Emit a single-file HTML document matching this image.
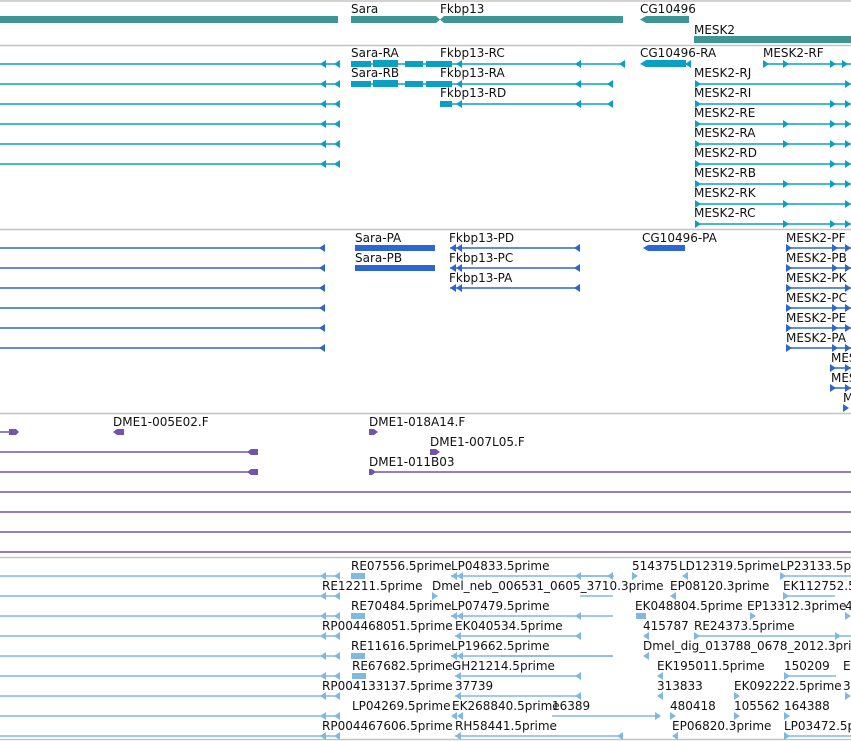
<!DOCTYPE html>
<html><head><meta charset="utf-8"><style>
html,body{margin:0;padding:0;background:#fff;width:851px;height:741px;overflow:hidden}
svg{display:block}
text{font-family:"DejaVu Sans","Liberation Sans",sans-serif;font-size:12px;fill:#111}
</style></head><body>
<svg width="851" height="741" viewBox="0 0 851 741">
<defs>
<polygon id="al" points="0,0 6,-4 6,4"/>
<polygon id="ar" points="6,0 0,-4 0,4"/>
</defs>
<!-- separators -->
<g stroke="#c4c4c4" stroke-width="1.5">
<line x1="0" y1="1" x2="851" y2="1"/><line x1="0" y1="45.5" x2="851" y2="45.5"/>
<line x1="0" y1="229.5" x2="851" y2="229.5"/><line x1="0" y1="413.5" x2="851" y2="413.5"/>
<line x1="0" y1="557.5" x2="851" y2="557.5"/><line x1="0" y1="739.5" x2="851" y2="739.5"/>
</g>

<!-- Track 1 genes -->
<g fill="#3f9494">
<rect x="0" y="16" width="338" height="7"/>
<polygon points="351,16 436,16 440,19.5 444,16 623,16 623,23 444,23 440,19.5 436,23 351,23"/>
<polygon points="640,19.5 646,16 689,16 689,23 646,23"/>
<rect x="694" y="36" width="157" height="7"/>
</g>
<text x="351" y="13">Sara</text><text x="440" y="13">Fkbp13</text><text x="640" y="13">CG10496</text><text x="694" y="34">MESK2</text>

<!-- Track 2 transcripts -->
<g fill="#0aa0c4" stroke="#0aa0c4">
<g stroke-width="1.5">
<line x1="0" y1="64" x2="340" y2="64"/><line x1="0" y1="84" x2="340" y2="84"/><line x1="0" y1="104" x2="340" y2="104"/>
<line x1="0" y1="124" x2="340" y2="124"/><line x1="0" y1="144" x2="340" y2="144"/><line x1="0" y1="164" x2="340" y2="164"/>
<line x1="351" y1="64" x2="625" y2="64"/><line x1="351" y1="84" x2="613" y2="84"/><line x1="440" y1="104" x2="613" y2="104"/>
<line x1="763" y1="64" x2="851" y2="64"/>
<line x1="695" y1="84" x2="851" y2="84"/><line x1="695" y1="104" x2="851" y2="104"/><line x1="695" y1="124" x2="851" y2="124"/>
<line x1="695" y1="144" x2="851" y2="144"/><line x1="695" y1="164" x2="851" y2="164"/><line x1="695" y1="184" x2="851" y2="184"/>
<line x1="695" y1="204" x2="851" y2="204"/><line x1="695" y1="224" x2="851" y2="224"/>
</g>
<g stroke="none">
<use href="#al" x="320" y="64"/><use href="#al" x="334" y="64"/><use href="#al" x="320" y="84"/><use href="#al" x="334" y="84"/>
<use href="#al" x="320" y="104"/><use href="#al" x="334" y="104"/><use href="#al" x="320" y="124"/><use href="#al" x="334" y="124"/>
<use href="#al" x="320" y="144"/><use href="#al" x="334" y="144"/><use href="#al" x="320" y="164"/><use href="#al" x="334" y="164"/>
<rect x="351" y="61" width="20" height="6"/><rect x="373" y="60" width="25" height="7"/><rect x="405" y="61" width="18" height="6"/><rect x="426" y="61" width="26" height="6"/>
<rect x="351" y="81" width="20" height="6"/><rect x="373" y="80" width="25" height="7"/><rect x="405" y="81" width="18" height="6"/><rect x="426" y="81" width="26" height="6"/>
<rect x="440" y="101" width="12" height="6"/>
<use href="#al" x="456" y="64"/><use href="#al" x="575" y="64"/><use href="#al" x="619" y="64"/>
<use href="#al" x="456" y="84"/><use href="#al" x="575" y="84"/><use href="#al" x="607" y="84"/>
<use href="#al" x="456" y="104"/><use href="#al" x="575" y="104"/><use href="#al" x="607" y="104"/>
<polygon points="640,64 646,60 686,60 686,67 646,67"/><use href="#al" x="685" y="64"/>
<use href="#ar" x="763" y="64"/><use href="#ar" x="783" y="64"/><use href="#ar" x="830" y="64"/><use href="#ar" x="842" y="64"/>
<use href="#ar" x="695" y="84"/><use href="#ar" x="845" y="84"/>
<use href="#ar" x="695" y="104"/><use href="#ar" x="830" y="104"/><use href="#ar" x="845" y="104"/>
<use href="#ar" x="695" y="124"/><use href="#ar" x="783" y="124"/><use href="#ar" x="830" y="124"/><use href="#ar" x="845" y="124"/>
<use href="#ar" x="695" y="144"/><use href="#ar" x="783" y="144"/><use href="#ar" x="830" y="144"/><use href="#ar" x="845" y="144"/>
<use href="#ar" x="695" y="164"/><use href="#ar" x="830" y="164"/><use href="#ar" x="845" y="164"/>
<use href="#ar" x="695" y="184"/><use href="#ar" x="783" y="184"/><use href="#ar" x="830" y="184"/><use href="#ar" x="845" y="184"/>
<use href="#ar" x="695" y="204"/><use href="#ar" x="783" y="204"/><use href="#ar" x="845" y="204"/>
<use href="#ar" x="695" y="224"/><use href="#ar" x="783" y="224"/><use href="#ar" x="830" y="224"/><use href="#ar" x="845" y="224"/>
</g></g>
<text x="351" y="57">Sara-RA</text><text x="351" y="77">Sara-RB</text>
<text x="440" y="57">Fkbp13-RC</text><text x="440" y="77">Fkbp13-RA</text><text x="440" y="97">Fkbp13-RD</text>
<text x="640" y="57">CG10496-RA</text><text x="763" y="57">MESK2-RF</text>
<text x="694" y="77">MESK2-RJ</text><text x="694" y="97">MESK2-RI</text><text x="694" y="117">MESK2-RE</text>
<text x="694" y="137">MESK2-RA</text><text x="694" y="157">MESK2-RD</text><text x="694" y="177">MESK2-RB</text>
<text x="694" y="197">MESK2-RK</text><text x="694" y="217">MESK2-RC</text>

<!-- Track 3 proteins -->
<g fill="#2d66d0" stroke="#2d66d0">
<g stroke-width="1.5">
<line x1="0" y1="248" x2="325" y2="248"/><line x1="0" y1="268" x2="325" y2="268"/><line x1="0" y1="288" x2="325" y2="288"/>
<line x1="0" y1="308" x2="325" y2="308"/><line x1="0" y1="328" x2="325" y2="328"/><line x1="0" y1="348" x2="325" y2="348"/>
<line x1="450" y1="248" x2="580" y2="248"/><line x1="450" y1="268" x2="580" y2="268"/><line x1="450" y1="288" x2="580" y2="288"/>
<line x1="786" y1="248" x2="851" y2="248"/><line x1="786" y1="268" x2="851" y2="268"/><line x1="786" y1="288" x2="851" y2="288"/>
<line x1="786" y1="308" x2="851" y2="308"/><line x1="786" y1="328" x2="851" y2="328"/><line x1="786" y1="348" x2="851" y2="348"/>
<line x1="830" y1="368" x2="851" y2="368"/><line x1="830" y1="388" x2="851" y2="388"/>
</g>
<g stroke="none">
<use href="#al" x="319" y="248"/><use href="#al" x="319" y="268"/><use href="#al" x="319" y="288"/>
<use href="#al" x="319" y="308"/><use href="#al" x="319" y="328"/><use href="#al" x="319" y="348"/>
<rect x="355" y="245" width="80" height="6"/><rect x="355" y="265" width="80" height="6"/>
<use href="#al" x="450" y="248"/><use href="#al" x="456" y="248"/><use href="#al" x="574" y="248"/>
<use href="#al" x="450" y="268"/><use href="#al" x="456" y="268"/><use href="#al" x="574" y="268"/>
<use href="#al" x="450" y="288"/><use href="#al" x="456" y="288"/><use href="#al" x="574" y="288"/>
<polygon points="643,248 648,245 685,245 685,251 648,251"/>
<use href="#ar" x="786" y="248"/><use href="#ar" x="832" y="248"/><use href="#ar" x="845" y="248"/>
<use href="#ar" x="786" y="268"/><use href="#ar" x="832" y="268"/><use href="#ar" x="845" y="268"/>
<use href="#ar" x="786" y="288"/><use href="#ar" x="845" y="288"/>
<use href="#ar" x="786" y="308"/><use href="#ar" x="832" y="308"/><use href="#ar" x="845" y="308"/>
<use href="#ar" x="786" y="328"/><use href="#ar" x="832" y="328"/><use href="#ar" x="845" y="328"/>
<use href="#ar" x="786" y="348"/><use href="#ar" x="832" y="348"/><use href="#ar" x="845" y="348"/>
<use href="#ar" x="830" y="368"/><use href="#ar" x="845" y="368"/><use href="#ar" x="830" y="388"/><use href="#ar" x="845" y="388"/>
<use href="#ar" x="843" y="408"/>
</g></g>
<text x="355" y="242">Sara-PA</text><text x="355" y="262">Sara-PB</text>
<text x="449" y="242">Fkbp13-PD</text><text x="449" y="262">Fkbp13-PC</text><text x="449" y="282">Fkbp13-PA</text>
<text x="642" y="242">CG10496-PA</text>
<text x="786" y="242">MESK2-PF</text><text x="786" y="262">MESK2-PB</text><text x="786" y="282">MESK2-PK</text>
<text x="786" y="302">MESK2-PC</text><text x="786" y="322">MESK2-PE</text><text x="786" y="342">MESK2-PA</text>
<text x="831" y="362">MESK2</text><text x="831" y="382">MESK2</text><text x="843" y="402">MESK2</text>

<!-- Track 4 -->
<g fill="#7354ac" stroke="#7354ac">
<g stroke-width="1.5">
<line x1="0" y1="432" x2="12" y2="432"/><line x1="0" y1="452" x2="252" y2="452"/><line x1="0" y1="472" x2="252" y2="472"/>
<line x1="369" y1="472" x2="851" y2="472"/>
<line x1="0" y1="492" x2="851" y2="492"/><line x1="0" y1="512" x2="851" y2="512"/>
<line x1="0" y1="532" x2="851" y2="532"/><line x1="0" y1="552" x2="851" y2="552"/>
</g>
<g stroke="none">
<polygon points="9,429 16,429 19,432 16,435 9,435"/>
<polygon points="113,432 117,429 124,429 124,435 117,435"/>
<polygon points="247,452 251,449 258,449 258,455 251,455"/>
<polygon points="247,472 251,469 258,469 258,475 251,475"/>
<polygon points="369,429 374,429 378,432 374,435 369,435"/>
<polygon points="430,449 436,449 440,452 436,455 430,455"/>
<polygon points="369,469 372,469 376,472 372,475 369,475"/>
</g></g>
<text x="113" y="426">DME1-005E02.F</text><text x="369" y="426">DME1-018A14.F</text>
<text x="430" y="446">DME1-007L05.F</text><text x="369" y="466">DME1-011B03</text>

<!-- Track 5 ESTs -->
<g fill="#80b8e0" stroke="#80b8e0">
<g stroke-width="1.5">
<line x1="0" y1="576" x2="340" y2="576"/><line x1="0" y1="596" x2="340" y2="596"/><line x1="0" y1="616" x2="340" y2="616"/>
<line x1="0" y1="636" x2="340" y2="636"/><line x1="0" y1="656" x2="340" y2="656"/><line x1="0" y1="676" x2="340" y2="676"/>
<line x1="0" y1="696" x2="340" y2="696"/><line x1="0" y1="716" x2="340" y2="716"/><line x1="0" y1="736" x2="340" y2="736"/>
<line x1="451" y1="576" x2="613" y2="576"/><line x1="580" y1="596" x2="613" y2="596"/>
<line x1="451" y1="616" x2="613" y2="616"/><line x1="455" y1="636" x2="580" y2="636"/>
<line x1="451" y1="656" x2="613" y2="656"/><line x1="455" y1="676" x2="580" y2="676"/>
<line x1="455" y1="696" x2="580" y2="696"/><line x1="552" y1="716" x2="660" y2="716"/>
<line x1="455" y1="736" x2="622" y2="736"/>
<line x1="780" y1="576" x2="851" y2="576"/><line x1="783" y1="596" x2="835" y2="596"/>
<line x1="694" y1="636" x2="851" y2="636"/><line x1="784" y1="676" x2="836" y2="676"/>
<line x1="784" y1="736" x2="851" y2="736"/><line x1="580" y1="576" x2="614" y2="576"/><line x1="500" y1="656" x2="613" y2="656"/>
</g>
<g stroke="none">
<use href="#al" x="320" y="576"/><use href="#al" x="334" y="576"/><use href="#al" x="320" y="596"/><use href="#al" x="334" y="596"/>
<use href="#al" x="320" y="616"/><use href="#al" x="334" y="616"/><use href="#al" x="320" y="636"/><use href="#al" x="334" y="636"/>
<use href="#al" x="320" y="656"/><use href="#al" x="334" y="656"/><use href="#al" x="320" y="676"/><use href="#al" x="334" y="676"/>
<use href="#al" x="320" y="696"/><use href="#al" x="334" y="696"/><use href="#al" x="320" y="716"/><use href="#al" x="334" y="716"/>
<use href="#al" x="320" y="736"/><use href="#al" x="334" y="736"/>
<rect x="351" y="573" width="14" height="6"/><rect x="351" y="613" width="14" height="6"/><rect x="351" y="653" width="14" height="6"/><rect x="352" y="673" width="14" height="6"/>
<use href="#ar" x="432" y="596"/>
<use href="#al" x="451" y="576"/><use href="#al" x="457" y="576"/><use href="#al" x="575" y="576"/><use href="#al" x="607" y="576"/>
<use href="#al" x="451" y="616"/><use href="#al" x="457" y="616"/><use href="#al" x="575" y="616"/>
<use href="#al" x="455" y="636"/><use href="#al" x="575" y="636"/><use href="#al" x="451" y="656"/><use href="#al" x="457" y="656"/>
<use href="#al" x="455" y="676"/><use href="#al" x="575" y="676"/><use href="#al" x="455" y="696"/><use href="#al" x="575" y="696"/>
<use href="#al" x="451" y="716"/><use href="#al" x="457" y="716"/><use href="#ar" x="655" y="716"/><use href="#al" x="455" y="736"/><use href="#al" x="617" y="736"/>
<use href="#ar" x="632" y="576"/><use href="#al" x="682" y="576"/><use href="#al" x="670" y="596"/>
<rect x="636" y="613" width="10" height="6"/><use href="#ar" x="750" y="616"/><use href="#al" x="643" y="636"/>
<use href="#ar" x="694" y="636"/><use href="#ar" x="835" y="636"/><use href="#al" x="643" y="656"/>
<use href="#al" x="657" y="676"/><use href="#al" x="657" y="696"/><use href="#ar" x="734" y="696"/>
<use href="#ar" x="670" y="716"/><use href="#ar" x="734" y="716"/><use href="#ar" x="784" y="716"/><use href="#al" x="672" y="736"/>
<use href="#ar" x="780" y="576"/><use href="#ar" x="783" y="596"/><use href="#ar" x="845" y="616"/><use href="#ar" x="784" y="676"/><use href="#ar" x="845" y="696"/>
<use href="#ar" x="784" y="736"/>
</g></g>
<text x="351" y="570">RE07556.5prime</text><text x="451" y="570">LP04833.5prime</text><text x="632" y="570">514375</text><text x="679" y="570">LD12319.5prime</text><text x="780" y="570">LP23133.5prime</text>
<text x="322" y="590">RE12211.5prime</text><text x="432" y="590">Dmel_neb_006531_0605_3710.3prime</text><text x="670" y="590">EP08120.3prime</text><text x="783" y="590">EK112752.5prime</text>
<text x="351" y="610">RE70484.5prime</text><text x="451" y="610">LP07479.5prime</text><text x="635" y="610">EK048804.5prime</text><text x="747" y="610">EP13312.3prime</text><text x="845" y="610">4</text>
<text x="322" y="630">RP004468051.5prime</text><text x="455" y="630">EK040534.5prime</text><text x="643" y="630">415787</text><text x="694" y="630">RE24373.5prime</text>
<text x="351" y="650">RE11616.5prime</text><text x="451" y="650">LP19662.5prime</text><text x="643" y="650">Dmel_dig_013788_0678_2012.3prime</text>
<text x="352" y="670">RE67682.5prime</text><text x="452" y="670">GH21214.5prime</text><text x="657" y="670">EK195011.5prime</text><text x="784" y="670">150209</text><text x="843" y="670">E</text>
<text x="322" y="690">RP004133137.5prime</text><text x="455" y="690">37739</text><text x="657" y="690">313833</text><text x="734" y="690">EK092222.5prime</text><text x="843" y="690">3</text>
<text x="352" y="710">LP04269.5prime</text><text x="452" y="710">EK268840.5prime</text><text x="552" y="710">16389</text><text x="670" y="710">480418</text><text x="734" y="710">105562</text><text x="784" y="710">164388</text>
<text x="322" y="730">RP004467606.5prime</text><text x="455" y="730">RH58441.5prime</text><text x="672" y="730">EP06820.3prime</text><text x="784" y="730">LP03472.5prime</text>
</svg>
</body></html>
